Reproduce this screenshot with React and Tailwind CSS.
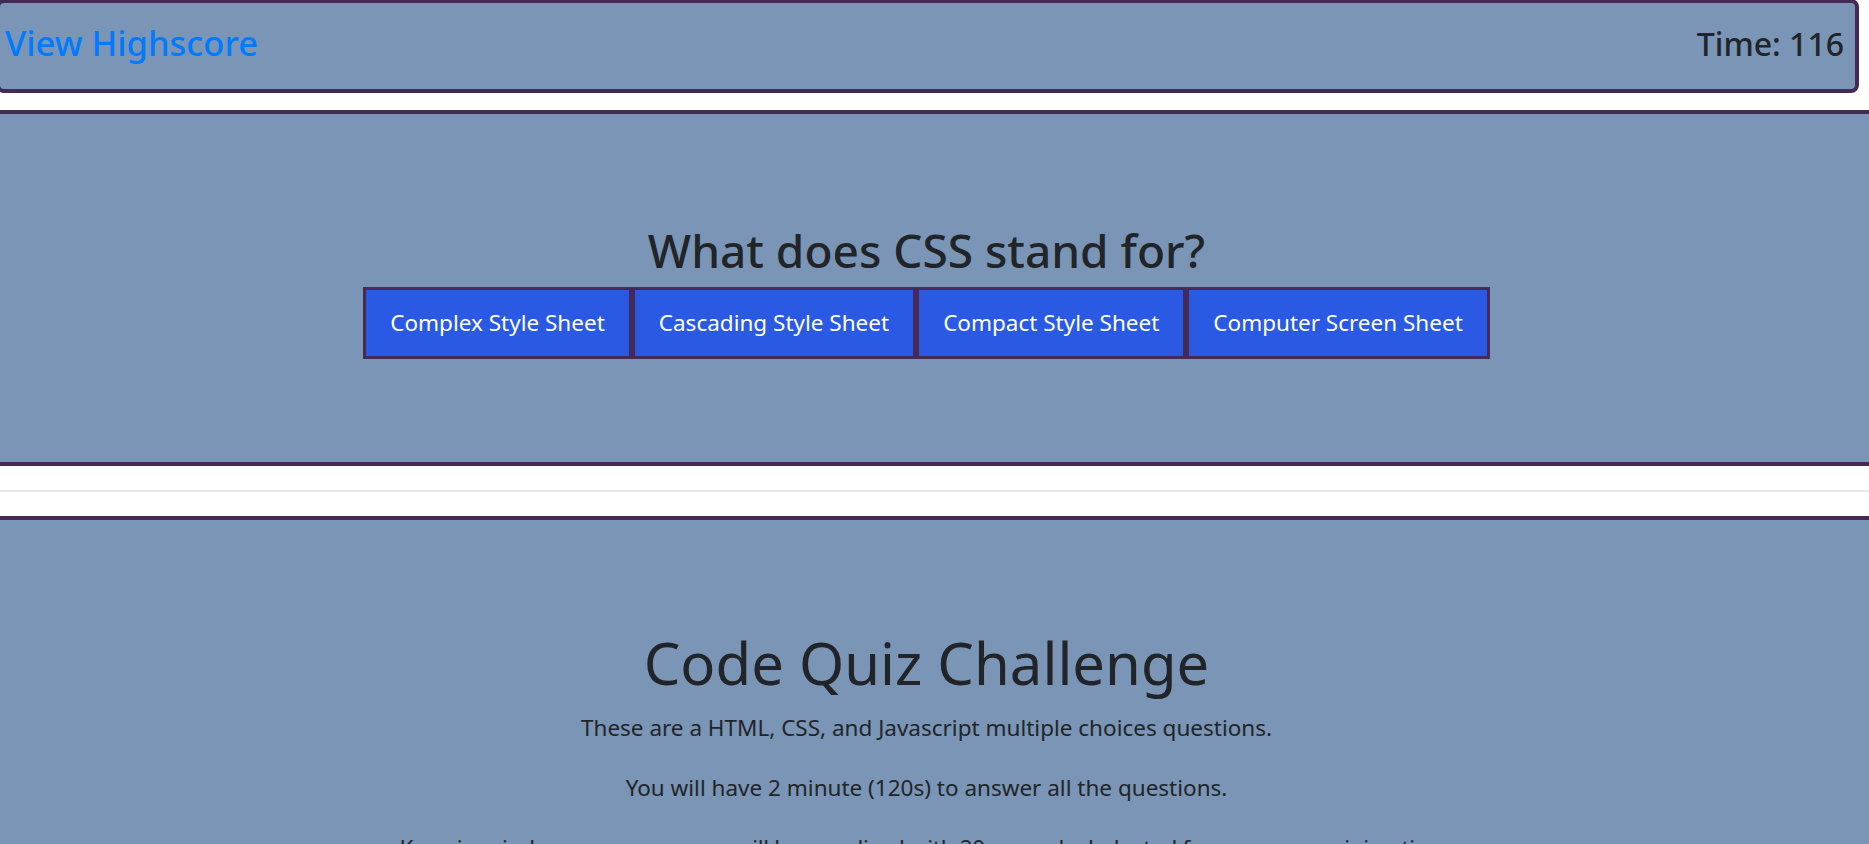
const answers = [
  "Complex Style Sheet",
  "Cascading Style Sheet",
  "Compact Style Sheet",
  "Computer Screen Sheet",
];

function Header() {
  return (
    <header className="-mt-px -ml-1 mr-[10px] flex h-[94px] items-baseline justify-between rounded-lg border-4 border-[#452a55] bg-[#7a95b5] pl-[5px] pr-[11px] pt-[19px]">
      <a href="#" className="text-[34.5px] font-medium leading-[1.2] text-[#007bff]">
        View Highscore
      </a>
      <h3 className="text-[32px] font-medium leading-[1.2] text-[#212529]">
        Time: 116
      </h3>
    </header>
  );
}

function QuestionCard() {
  return (
    <section className="-mx-1 mt-[17px] border-4 border-[#452a55] bg-[#7a95b5] pb-[103px] pr-[16px] pt-[109px]">
      <h2 className="mb-[9px] text-center text-[46px] font-medium leading-[1.2] text-[#212529]">
        What does CSS stand for?
      </h2>
      <div className="flex justify-center">
        {answers.map((a) => (
          <button
            key={a}
            className="border-[3px] border-[#452a55] bg-[#2a5ae4] px-6 py-[18px] text-[22.5px] leading-[30px] text-white"
          >
            {a}
          </button>
        ))}
      </div>
    </section>
  );
}

function Intro() {
  return (
    <section className="-mx-1 mt-[24px] min-h-[400px] border-4 border-[#452a55] bg-[#7a95b5] pr-[16px] pt-[108px] text-center text-[#212529]">
      <h1 className="mb-[14px] text-[58px] font-normal leading-[1.2]">
        Code Quiz Challenge
      </h1>
      <p className="mb-[28px] text-[22.5px] leading-[32px]">
        These are a HTML, CSS, and Javascript multiple choices questions.
      </p>
      <p className="mb-[28px] text-[22.5px] leading-[32px]">
        You will have 2 minute (120s) to answer all the questions.
      </p>
      <p className="mb-[28px] text-[22.5px] leading-[32px] tracking-[-0.33px]">
        Keep in mind any wrong answer will be penalized with 20 seconds deducted from your remaining time.
      </p>
    </section>
  );
}

export default function App() {
  return (
    <div className="h-screen overflow-hidden bg-white font-['Noto_Sans','Open_Sans',sans-serif]">
      <Header />
      <QuestionCard />
      <hr className="mt-[24px] h-[2px] border-0 bg-[#e8e8e8]" />
      <Intro />
    </div>
  );
}
